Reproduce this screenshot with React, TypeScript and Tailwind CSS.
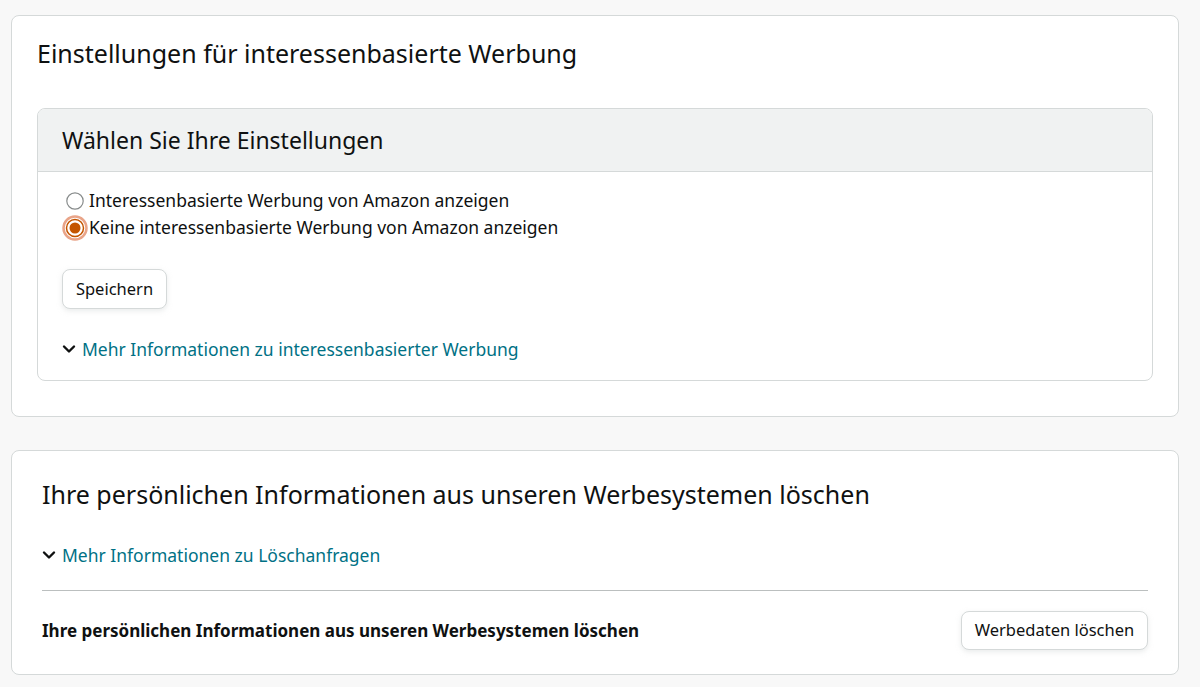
import React, { useState } from "react";

const Chevron = () => (
  <svg width="14" height="14" viewBox="0 0 14 14" className="shrink-0">
    <polyline points="2,4.5 7,9.5 12,4.5" fill="none" stroke="#0f1111" strokeWidth="2.4" strokeLinecap="round" strokeLinejoin="round" />
  </svg>
);

const Radio: React.FC<{ checked: boolean }> = ({ checked }) =>
  checked ? (
    <svg width="26" height="26" viewBox="0 0 26 26" className="shrink-0">
      <circle cx="13" cy="13" r="11.5" fill="none" stroke="#e9a488" strokeWidth="2.5" />
      <circle cx="13" cy="13" r="8.5" fill="#fff" stroke="#c45500" strokeWidth="1.5" />
      <circle cx="13" cy="13" r="5.5" fill="#c45500" />
    </svg>
  ) : (
    <svg width="26" height="26" viewBox="0 0 26 26" className="shrink-0">
      <circle cx="13" cy="13" r="8.2" fill="#fff" stroke="#888c8c" strokeWidth="1.2" />
    </svg>
  );

export default function App() {
  const [choice, setChoice] = useState<"yes" | "no">("no");

  return (
    <div
      className="min-h-screen bg-[#f8f8f8] pl-[11px] pr-[21px] pt-[15px] pb-[14px] text-[#0f1111]"
      style={{ fontFamily: '"Noto Sans", Arial, sans-serif' }}
    >
      <section className="rounded-[8px] border border-[#d5d9d9] bg-white px-[25px] pt-[21px] pb-[35px]">
        <h1 className="text-[25px] leading-[32px] font-normal">Einstellungen für interessenbasierte Werbung</h1>

        <div className="mt-[39px] overflow-hidden rounded-[8px] border border-[#d5d9d9]">
          <div className="flex h-[63px] items-center border-b border-[#d5d9d9] bg-[#f0f2f2] px-[24px]">
            <h2 className="text-[23px] leading-[28px] font-normal">Wählen Sie Ihre Einstellungen</h2>
          </div>
          <div className="px-[24px] pt-[15px] pb-[19px]">
            <label className="flex h-[27px] cursor-pointer items-center gap-[1px]" onClick={() => setChoice("yes")}>
              <Radio checked={choice === "yes"} />
              <span className="text-[17.5px]">Interessenbasierte Werbung von Amazon anzeigen</span>
            </label>
            <label className="flex h-[27px] cursor-pointer items-center gap-[1px]" onClick={() => setChoice("no")}>
              <Radio checked={choice === "no"} />
              <span className="text-[17.5px]">Keine interessenbasierte Werbung von Amazon anzeigen</span>
            </label>

            <button className="mt-[28px] h-[40px] w-[105px] rounded-[8px] border border-[#d5d9d9] bg-white text-[16.5px] shadow-[0_2px_5px_0_rgba(213,217,217,0.5)]">
              Speichern
            </button>

            <a href="#" className="mt-[28px] flex items-center gap-[6px] text-[17.5px] leading-[24px] text-[#007185]">
              <Chevron />
              Mehr Informationen zu interessenbasierter Werbung
            </a>
          </div>
        </div>
      </section>

      <section className="mt-[33px] rounded-[8px] border border-[#d5d9d9] bg-white px-[30px] pt-[27px] pb-[24px]">
        <h2 className="text-[25px] leading-[32px] font-normal">
          Ihre persönlichen Informationen aus unseren Werbesystemen löschen
        </h2>

        <a href="#" className="mt-[33px] flex items-center gap-[6px] text-[17.5px] leading-[24px] text-[#007185]">
          <Chevron />
          Mehr Informationen zu Löschanfragen
        </a>

        <div className="mt-[23px] border-t border-[#bbbfbf]" />

        <div className="mt-[20px] flex items-center justify-between">
          <span className="text-[17px] font-bold">Ihre persönlichen Informationen aus unseren Werbesystemen löschen</span>
          <button className="h-[39px] w-[187px] rounded-[8px] border border-[#d5d9d9] bg-white text-[16.5px] shadow-[0_2px_5px_0_rgba(213,217,217,0.5)]">
            Werbedaten löschen
          </button>
        </div>
      </section>
    </div>
  );
}
